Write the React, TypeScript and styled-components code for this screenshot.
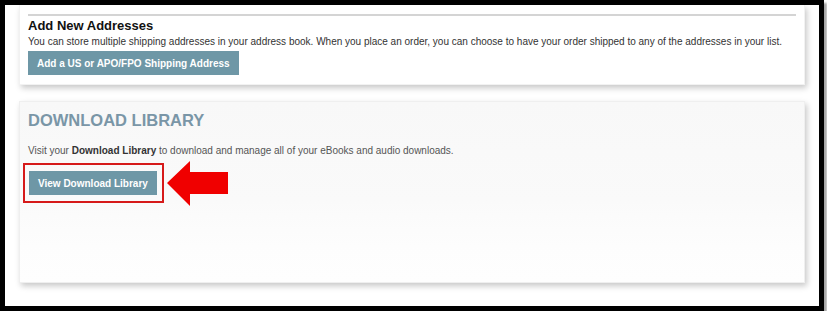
import React from "react";
import styled, { createGlobalStyle } from "styled-components";

const Global = createGlobalStyle`
  html, body { margin: 0; padding: 0; background: #ffffff; }
  body { font-family: "Liberation Sans", Arial, sans-serif; }
`;

const Frame = styled.div`
  box-sizing: border-box;
  width: 824px;
  height: 311px;
  border: 5px solid #000;
  background: #fff;
  box-shadow: 3px 3px 2px rgba(0, 0, 0, 0.35);
  padding: 0 14px 23px 14px;
  display: flex;
  flex-direction: column;
  gap: 16px;
  overflow: hidden;
`;

const Card = styled.section<{ $tinted?: boolean }>`
  box-sizing: border-box;
  background: ${(p) => (p.$tinted ? "linear-gradient(#f8f8f8 0%, #fafafa 55%, #fdfdfd 80%, #fefefe 100%)" : "#ffffff")};
  border: 1px solid ${(p) => (p.$tinted ? "#efefef" : "#f2f2f2")};
  border-top: ${(p) => (p.$tinted ? "1px solid #efefef" : "none")};
  box-shadow: 2px 3px 6px rgba(0, 0, 0, 0.22);
  padding: ${(p) => (p.$tinted ? "8px 8px 0 8px" : "9px 8px 9px 8px")};
  display: flex;
  flex-direction: column;
  align-items: flex-start;
  flex: ${(p) => (p.$tinted ? "1 1 auto" : "0 0 auto")};
`;

const Rule = styled.hr`
  align-self: stretch;
  margin: 0;
  border: none;
  height: 2px;
  background: #d4d4d4;
`;

const SubHeading = styled.h3`
  margin: 2px 0 0 0;
  font-size: 13px;
  line-height: 15px;
  font-weight: bold;
  color: #111;
`;

const Heading = styled.h2`
  margin: 0;
  font-size: 16.5px;
  line-height: 20px;
  font-weight: bold;
  color: #7a96a7;
`;

const Text = styled.p<{ $gap?: number }>`
  margin: ${(p) => p.$gap ?? 2}px 0 0 0;
  font-size: 10px;
  line-height: 13px;
  color: ${(p) => (p.$gap ? "#555" : "#333")};
  white-space: nowrap;
  b { color: #333; }
`;

const Button = styled.button<{ $gap: number }>`
  margin-top: ${(p) => p.$gap}px;
  box-sizing: border-box;
  height: 24px;
  padding: 0 9px;
  border: none;
  background: #6e97a6;
  color: #fff;
  font-family: "Liberation Sans", Arial, sans-serif;
  font-size: 10px;
  font-weight: bold;
  cursor: pointer;
  white-space: nowrap;
`;

const Highlight = styled.div`
  position: relative;
  margin-top: 14px;
  margin-left: 1px;
`;

const HighlightBox = styled.span`
  position: absolute;
  left: -6px;
  top: -8px;
  width: 141px;
  height: 40px;
  box-sizing: border-box;
  border: 2px solid #d61a1a;
  pointer-events: none;
`;

const Arrow = styled.svg`
  position: absolute;
  left: 138px;
  top: -10px;
  width: 62px;
  height: 46px;
`;

export default function App() {
  return (
    <>
      <Global />
      <Frame>
        <Card>
          <Rule />
          <SubHeading>Add New Addresses</SubHeading>
          <Text>
            You can store multiple shipping addresses in your address book. When you place an order, you can choose to
            have your order shipped to any of the addresses in your list.
          </Text>
          <Button $gap={3}>Add a US or APO/FPO Shipping Address</Button>
        </Card>
        <Card $tinted>
          <Heading>DOWNLOAD LIBRARY</Heading>
          <Text $gap={14}>
            Visit your <b>Download Library</b> to download and manage all of your eBooks and audio downloads.
          </Text>
          <Highlight>
            <Button $gap={0}>View Download Library</Button>
            <HighlightBox />
            <Arrow viewBox="0 0 62 46">
              <polygon points="0,22 23,0 23,11 61,11 61,33 23,33 23,45" fill="#f00000" />
            </Arrow>
          </Highlight>
        </Card>
      </Frame>
    </>
  );
}
